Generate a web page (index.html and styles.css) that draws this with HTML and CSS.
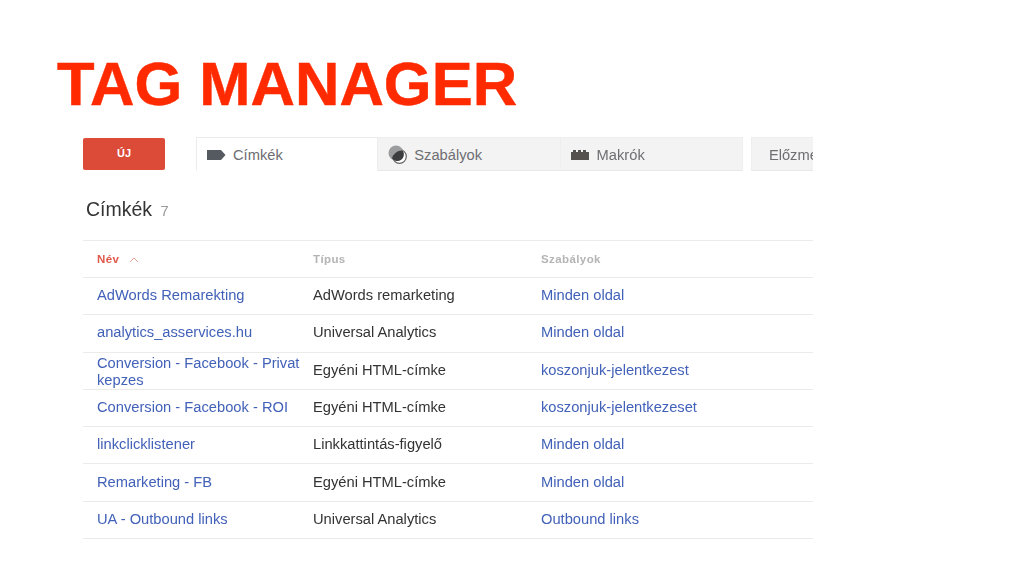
FILE: index.html
```html
<!DOCTYPE html>
<html lang="hu">
<head>
<meta charset="utf-8">
<title>Tag Manager</title>
<link rel="stylesheet" href="styles.css">
</head>
<body>
<h1 class="title">TAG MANAGER</h1>
<main class="panel">
  <div class="toolbar">
    <button class="new-btn">ÚJ</button>
    <nav class="tabs">
      <div class="tab active">
        <svg class="ico" width="19" height="10" viewBox="0 0 19 10"><path d="M0 0H14L18.500 5L14 10H0Z" fill="#555a60"/></svg>
        <span>Címkék</span>
      </div>
      <div class="tab">
        <svg class="ico" width="19" height="19" viewBox="0 0 19 19"><circle cx="11.500" cy="11.500" r="6.800" fill="#fff" stroke="#666" stroke-width="1.200"/><circle cx="8" cy="8" r="7.500" fill="#9a9c9e"/><path d="M4 13.500A6.500 6.500 0 0 0 14.500 5.500C10.500 5 5 8.500 4 13.500Z" fill="#3c3d3f"/></svg>
        <span>Szabályok</span>
      </div>
      <div class="tab">
        <svg class="ico" width="19" height="10" viewBox="0 0 19 10"><path d="M0 10V2H2V0H5V2H7V0H10V2H12V0H15V2H18V10Z" fill="#55514e"/></svg>
        <span>Makrók</span>
      </div>
      <div class="tab last"><span>Előzmények</span></div>
    </nav>
  </div>
  <h2 class="heading">Címkék <span class="count">7</span></h2>
  <table class="list">
    <thead>
      <tr><th class="sorted">Név <svg class="caret" width="10" height="6" viewBox="0 0 10 6"><path d="M1 5L5 1L9 5" fill="none" stroke="#e8a59c" stroke-width="1"/></svg></th><th>Típus</th><th>Szabályok</th></tr>
    </thead>
    <tbody>
      <tr><td><a>AdWords Remarekting</a></td><td>AdWords remarketing</td><td><a>Minden oldal</a></td></tr>
      <tr><td><a>analytics_asservices.hu</a></td><td>Universal Analytics</td><td><a>Minden oldal</a></td></tr>
      <tr><td class="two-line"><a>Conversion - Facebook - Privat kepzes</a></td><td>Egyéni HTML-címke</td><td><a>koszonjuk-jelentkezest</a></td></tr>
      <tr><td><a>Conversion - Facebook - ROI</a></td><td>Egyéni HTML-címke</td><td><a>koszonjuk-jelentkezeset</a></td></tr>
      <tr><td><a>linkclicklistener</a></td><td>Linkkattintás-figyelő</td><td><a>Minden oldal</a></td></tr>
      <tr><td><a>Remarketing - FB</a></td><td>Egyéni HTML-címke</td><td><a>Minden oldal</a></td></tr>
      <tr><td><a>UA - Outbound links</a></td><td>Universal Analytics</td><td><a>Outbound links</a></td></tr>
    </tbody>
  </table>
</main>
</body>
</html>
```
FILE: styles.css
```css
* { box-sizing: border-box; }
html, body { margin: 0; height: 100%; overflow: hidden; }
body { background: #fff; font-family: "Liberation Sans", Arial, sans-serif; padding: 48px 0 0 57px; }
.title { margin: 0; font-size: 61.500px; line-height: 72px; font-weight: 700; color: #ff2a00; -webkit-text-stroke: 0.5px #ff2a00; }
.panel { width: 730px; margin: 17px 0 0 26px; overflow: hidden; filter: blur(0.35px); }
.toolbar { display: flex; align-items: flex-start; }
.new-btn { width: 82px; height: 32px; margin-top: 1px; border: 0; border-radius: 2px; background: #dc4a38; color: #fff; font: 700 11px "Liberation Sans", sans-serif; flex: none; padding: 0 0 3px; }
.tabs { display: flex; margin-left: 31px; flex: none; }
.tab { width: 182.300px; height: 34px; display: flex; align-items: center; gap: 7px; padding: 1px 0 0 10px; background: #f3f3f3; border: 1px solid #eeeeee; border-left-width: 0; border-bottom-color: #e8e8e8; color: #6e6e72; font-size: 14.700px; flex: none; }
.tab.active { background: #fff; border: 1px solid #ececec; border-bottom-color: #fff; }
.tab.last { margin-left: 8px; border-left-width: 1px; padding-left: 17px; }
.heading { margin: 27px 0 0 3px; height: 42px; font-size: 19.500px; line-height: 22px; font-weight: 400; color: #333; }
.count { margin-left: 3px; font-size: 14.700px; color: #999; }
.list { width: 730px; border-collapse: collapse; table-layout: fixed; font-size: 14.700px; color: #333; }
.list th:nth-child(1), .list td:nth-child(1) { width: 230px; padding-left: 14px; padding-right: 8px; }
.list th:nth-child(2), .list td:nth-child(2) { width: 228px; }
.list tbody tr { height: 37.300px; border-bottom: 1px solid #ebebeb; }
.list thead tr { height: 37px; border-top: 1px solid #ebebeb; border-bottom: 1px solid #ebebeb; }
.list th { text-align: left; font-size: 11.500px; letter-spacing: 0.4px; font-weight: 700; color: #b4b4b4; padding: 0; }
.list th.sorted { color: #e0584b; }
.caret { margin-left: 6px; }
.list td { padding: 0 0 1px; line-height: 17px; }
.list td.two-line { padding-top: 2px; padding-bottom: 0; }
.list a { color: #4261b8; }
```
